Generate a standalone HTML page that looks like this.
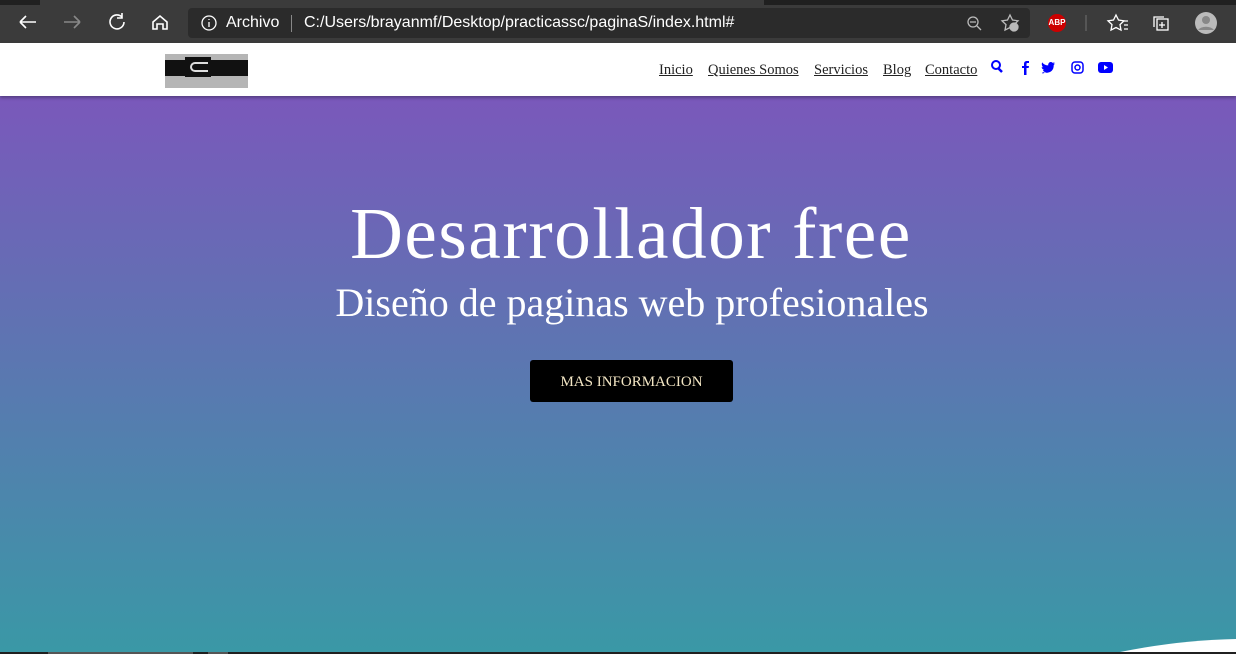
<!DOCTYPE html>
<html><head><meta charset="utf-8"><style>
*{margin:0;padding:0;box-sizing:border-box}
body{width:1236px;height:654px;overflow:hidden;font-family:"Liberation Serif",serif;background:#fff;position:relative}
.chrome{position:absolute;left:0;top:0;width:1236px;height:43px;background:#3b3b3b}
.tabstrip{position:absolute;left:0;top:0;width:1236px;height:5px;background:#202020}
.tabstrip .t{position:absolute;left:40px;top:0;width:724px;height:5px;background:#3b3b3b}
.addr{position:absolute;left:188px;top:8px;width:842px;height:30px;background:#2b2b2b;border-radius:4px}
.ct{position:absolute;color:#fff;font-family:"Liberation Sans",sans-serif;font-size:16px;top:14px}
.nav{position:absolute;left:0;top:43px;width:1236px;height:53px;background:#fff;box-shadow:0 2px 3px rgba(0,0,0,.3);z-index:2}
.nav a{position:absolute;top:19px;font-size:14.5px;color:#222;text-decoration:underline;white-space:nowrap}
.hero{position:absolute;left:0;top:96px;width:1236px;height:556px;background:linear-gradient(#7a58bb,#3a98a6)}
h1{position:absolute;top:192px;left:0;width:1262px;text-align:center;color:#fff;font-weight:normal;font-size:73px;letter-spacing:1.6px;white-space:nowrap}
h2{position:absolute;top:279px;left:0;width:1264px;text-align:center;color:#fff;font-weight:normal;font-size:40px;white-space:nowrap}
.btn{position:absolute;left:530px;top:360px;width:203px;height:42px;background:#000;border-radius:3px;color:#f3e6c4;font-size:15px;text-align:center;line-height:44px}
.bottom{position:absolute;left:0;top:652px;width:1236px;height:2px;background:#202020}
</style></head><body>
<div class="chrome"><div class="tabstrip"><div class="t"></div></div>
<svg style="position:absolute;left:0;top:0" width="190" height="43" fill="none" stroke="#fff" stroke-width="1.6">
<path d="M20 22h16M20 22l6-6M20 22l6 6"/>
<path d="M64 22h16M80 22l-6-6M80 22l-6 6" stroke="#888"/>
<path d="M122 17a7 7 0 1 0 2 5M122 13v5h-5"/>
<path d="M153 22l7-6 7 6v7h-4v-5h-6v5h-4z"/>
</svg>
<div class="addr"></div>
<svg style="position:absolute;left:200px;top:14px" width="18" height="18" fill="none" stroke="#fff" stroke-width="1.3"><circle cx="9" cy="9" r="7"/><path d="M9 8v5M9 5v1"/></svg>
<div class="ct" style="left:226px">Archivo</div>
<div style="position:absolute;left:291px;top:15px;width:1px;height:17px;background:#888"></div>
<div class="ct" style="left:304px">C:/Users/brayanmf/Desktop/practicassc/paginaS/index.html#</div>
<svg style="position:absolute;left:960px;top:10px" width="276" height="28" fill="none" stroke="#bbb" stroke-width="1.3">
<circle cx="13" cy="12" r="5"/><path d="M17 16l4 4M10 12h6"/>
<path d="M50 5l2.5 5 5.5.8-4 3.8 1 5.5-5-2.6-5 2.6 1-5.5-4-3.8 5.5-.8z"/><circle cx="54" cy="17" r="4" fill="#bbb"/>
<path d="M126 5v16" stroke="#666"/>
<path d="M156 5l2.5 5 5.5.8-4 3.8 1 5.5-5-2.6-5 2.6 1-5.5-4-3.8 5.5-.8zM163 11h5M164 15h4M164 19h4" stroke="#fff"/>
<rect x="197" y="9" width="11" height="11" stroke="#fff"/><path d="M202 12v6M199 15h6M194 17V7h10" stroke="#fff"/>
<circle cx="246" cy="13" r="11" fill="#bbb" stroke="none"/><circle cx="246" cy="10" r="4" fill="#888" stroke="none"/><path d="M238 20a9 6 0 0 1 16 0" fill="#888" stroke="none"/>
</svg>
<div style="position:absolute;left:1048px;top:14px;width:18px;height:18px;border-radius:50%;background:#c00;color:#fff;font:bold 8px 'Liberation Sans',sans-serif;line-height:18px;text-align:center">ABP</div>
</div>
<div class="nav">
<div style="position:absolute;left:165px;top:11px;width:83px;height:34px;background:#b5b5b5"><div style="position:absolute;left:0;top:6px;width:83px;height:16px;background:#111"></div><div style="position:absolute;left:20px;top:3px;width:26px;height:20px;background:#111"></div><div style="position:absolute;left:25px;top:8px;width:18px;height:10px;border:2px solid #ddd;border-right:none;border-radius:6px 0 0 6px"></div></div>
<a style="left:659px">Inicio</a><a style="left:708px">Quienes Somos</a><a style="left:814px">Servicios</a><a style="left:883px">Blog</a><a style="left:925px">Contacto</a>
<svg style="position:absolute;left:990px;top:16px" width="125" height="18" fill="#00f">
<circle cx="6" cy="6" r="4" fill="none" stroke="#00f" stroke-width="2"/><path d="M8 9l4 4" stroke="#00f" stroke-width="2.5"/>
<path d="M34 16V9h-2V7h2V5c0-2 1-3 3-3h2v2h-1.5c-.8 0-1 .4-1 1v2h2.5l-.4 2H36.5v7z"/>
<path d="M53 13c3 1.5 8 1 10-3 .5-1 .8-3 .7-4l1.5-1.5-1.8.4 1.3-1.6-2 .6c-1.5-1.5-4-1-4.5 1.5v1c-2.5 0-4.5-1-6-3-1 2 0 4 1 5l-1.5-.4c0 1.5 1 2.5 2.5 3l-1.3.1c.5 1.2 1.5 2 3 2-1 1-2.5 1.4-4 1.2z"/>
<rect x="82" y="3" width="11" height="11" rx="3" fill="none" stroke="#00f" stroke-width="1.5"/><circle cx="87.5" cy="8.5" r="2.5" fill="none" stroke="#00f" stroke-width="1.5"/>
<rect x="108" y="3" width="15" height="11" rx="3"/><path d="M114 6v5l4-2.5z" fill="#fff"/>
</svg>
</div>
<div class="hero"></div>
<h1>Desarrollador free</h1>
<h2>Diseño de paginas web profesionales</h2>
<div class="btn">MAS INFORMACION</div>
<svg style="position:absolute;left:1120px;top:636px" width="116" height="16"><path d="M0 16Q60 4 116 3V16z" fill="#fff"/></svg>
<div class="bottom"><div style="position:absolute;left:48px;width:145px;height:2px;background:#555"></div><div style="position:absolute;left:208px;width:20px;height:2px;background:#555"></div></div>
</body></html>
